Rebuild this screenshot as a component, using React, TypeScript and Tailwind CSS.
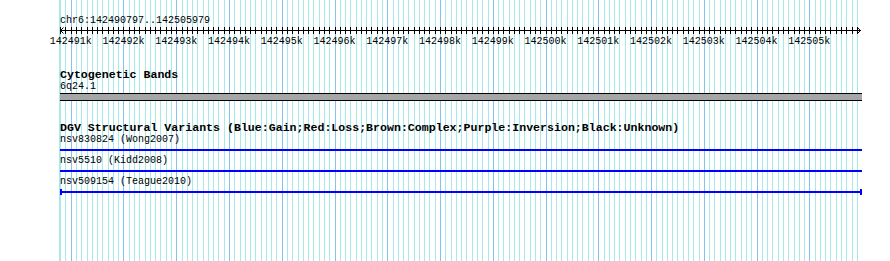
const START = 142490797;
const END = 142505979;
const LEFT = 60;
const WIDTH = 801;

const px = (bp: number) => LEFT + ((bp - START) * WIDTH) / (END - START);

const ticks: number[] = [];
for (let bp = 142490800; bp <= END; bp += 100) ticks.push(bp);

const variants = [
  { name: 'nsv830824 (Wong2007)', caps: false },
  { name: 'nsv5510 (Kidd2008)', caps: false },
  { name: 'nsv509154 (Teague2010)', caps: true },
];

function Grid() {
  return (
    <svg className="absolute inset-0" width={890} height={261} shapeRendering="crispEdges">
      <rect x={59} y={0} width={1} height={261} fill="#a6eaea" />
      {ticks.map((bp) => {
        const x = Math.round(px(bp)) + 0.5;
        const major = bp % 1000 === 0;
        return (
          <line
            key={bp}
            x1={x}
            x2={x}
            y1={0}
            y2={261}
            stroke={major ? '#84c2f0' : '#a6eaea'}
            strokeWidth={1}
          />
        );
      })}
    </svg>
  );
}

function Ruler() {
  const majors = ticks.filter((bp) => bp % 1000 === 0);
  const r = LEFT + WIDTH;
  return (
    <svg width={890} height={20} className="block" fontFamily="'Liberation Mono', monospace">
      <g shapeRendering="crispEdges" stroke="#000">
        <line x1={LEFT} x2={r} y1={3.5} y2={3.5} />
        {ticks.map((bp) => {
          const x = Math.round(px(bp)) + 0.5;
          return <line key={bp} x1={x} x2={x} y1={0} y2={7} />;
        })}
      </g>
      <polyline points={`${LEFT + 3.5},0.5 ${LEFT + 0.5},3.5 ${LEFT + 3.5},6.5`} fill="none" stroke="#000" />
      <polyline points={`${r - 3.5},0.5 ${r - 0.5},3.5 ${r - 3.5},6.5`} fill="none" stroke="#000" />
      {majors.map((bp) => (
        <text key={bp} x={px(bp)} y={16.5} fontSize={10} textAnchor="middle" fill="#000">
          {Math.round(bp / 1000)}k
        </text>
      ))}
    </svg>
  );
}

export default function App() {
  return (
    <div className="relative w-[890px] h-[261px] overflow-hidden bg-white font-['Liberation_Mono',monospace] text-black">
      <Grid />
      <div className="relative flex flex-col pt-[15px]">
        {/* ruler */}
        <div className="ml-[60px] text-[10px] leading-[12px]">chr6:142490797..142505979</div>
        <Ruler />

        {/* cytogenetic bands */}
        <div className="mt-[22px] ml-[60px] flex flex-col w-[802px]">
          <div className="text-[11.6px] leading-[12px] font-bold">Cytogenetic Bands</div>
          <div className="text-[10px] leading-[12px]">6q24.1</div>
          <div className="h-[8px] border-y border-black bg-[#a6a6a6]" />
        </div>

        {/* DGV */}
        <div className="mt-[21px] ml-[60px] flex flex-col w-[802px]">
          <div className="text-[11.6px] leading-[12px] font-bold">
            DGV Structural Variants (Blue:Gain;Red:Loss;Brown:Complex;Purple:Inversion;Black:Unknown)
          </div>
          {variants.map((v) => (
            <div key={v.name} className="flex flex-col h-[21px]">
              <div className="text-[10px] leading-[12px]">{v.name}</div>
              <div className="relative mt-[3px] h-[2px] bg-[#0000ff]">
                {v.caps && (
                  <>
                    <span className="absolute left-0 top-[-2px] w-[2px] h-[6px] bg-[#0000ff]" />
                    <span className="absolute right-0 top-[-2px] w-[2px] h-[6px] bg-[#0000ff]" />
                  </>
                )}
              </div>
            </div>
          ))}
        </div>
      </div>
    </div>
  );
}
